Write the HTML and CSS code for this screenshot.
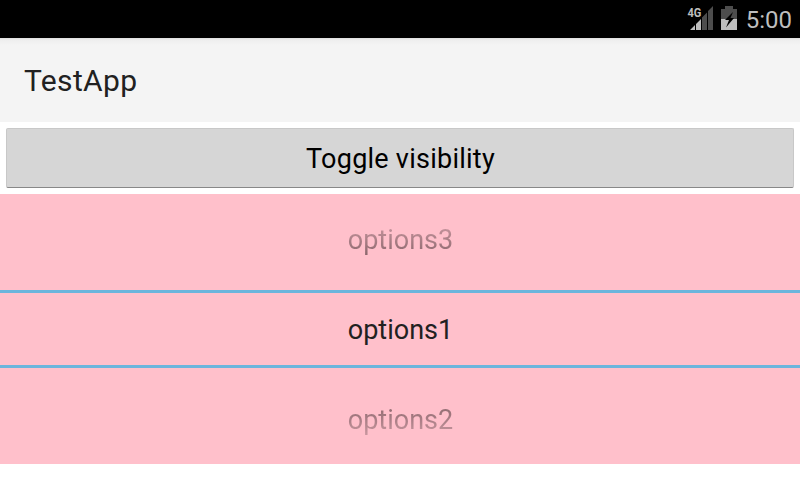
FILE: index.html
```html
<!DOCTYPE html>
<html lang="en">
<head>
<meta charset="utf-8">
<title>TestApp</title>
<link rel="stylesheet" href="styles.css">
</head>
<body>
<div class="status">
  <svg class="signal" width="27" height="26" viewBox="0 0 27 26">
    <path fill="#bebebe" d="M3 25L8 20V25zM9 19L14 14V25H9z"/>
    <path fill="#4d4d4d" d="M15 12.500L20 7.500V25h-5zM21 6L26 1V25h-5z"/>
    <text class="network" transform="translate(.5 12) scale(.82 1)" x="0" y="0">4G</text>
  </svg>
  <svg class="battery" width="16" height="24" viewBox="0 0 16 24">
    <path fill="#4d4d4d" d="M4 0h8v3h4v10H0V3h4z"/>
    <path fill="#bebebe" d="M0 13h16v11H0z"/>
    <path fill="#000" d="M12 6L4 14h4l-3 7.500L13 12H9.500z"/>
  </svg>
  <span class="clock">5:00</span>
</div>
<header class="bar"><h1 class="title">TestApp</h1></header>
<main>
  <button class="toggle">Toggle visibility</button>
  <div class="picker">
    <div class="option above"><span class="fade-up">options3</span></div>
    <div class="option current"><span>options1</span></div>
    <div class="option below"><span class="fade-down">options2</span></div>
  </div>
</main>
</body>
</html>
```

FILE: styles.css
```css
* { box-sizing: border-box; }
body { margin: 0; height: 480px; overflow: hidden; background: #fff; font-family: Roboto, sans-serif; color: #212121; }
.status { height: 38px; background: #000; display: flex; justify-content: flex-end; align-items: center; padding-right: 8px; }
.signal { margin-top: -2px; overflow: visible; }
.network { font: bold 13.5px Roboto, sans-serif; fill: #bebebe; stroke: #000; stroke-width: 1.5px; paint-order: stroke; }
.battery { margin: -2px 9px 0 7px; }
.clock { font-size: 24px; color: #bebebe; padding-top: 1px; }
.bar { height: 84px; background: linear-gradient(#dedede, #eee 2px, #f4f4f4 7px); display: flex; align-items: center; padding-left: 24px; }
.title { margin: 0; font-size: 30px; font-weight: 400; letter-spacing: 0.35px; }
.toggle { display: block; width: 788px; height: 60px; margin: 6px; padding: 2px 0 0 1px; border: 1px solid #c8c8c8; border-bottom-color: #888; border-radius: 2px; background: #d6d6d6; font: 27px Roboto, sans-serif; letter-spacing: 0.25px; color: #000; }
.picker { height: 270px; background: #ffc0cb; display: grid; grid-template-rows: 96px 78px 96px; }
.option { display: flex; align-items: center; justify-content: center; font-size: 27px; padding-left: 1px; }
.above { padding-bottom: 4px; }
.below { padding-top: 8px; }
.current { border-top: 3px solid #6bb5dc; border-bottom: 3px solid #6bb5dc; padding-top: 2px; }
.fade-up, .fade-down { color: transparent; background-clip: text; -webkit-background-clip: text; }
.fade-up { background-image: linear-gradient(#cb98a1, #8a666c); }
.fade-down { background-image: linear-gradient(#8a666c, #cb98a1); }
```
